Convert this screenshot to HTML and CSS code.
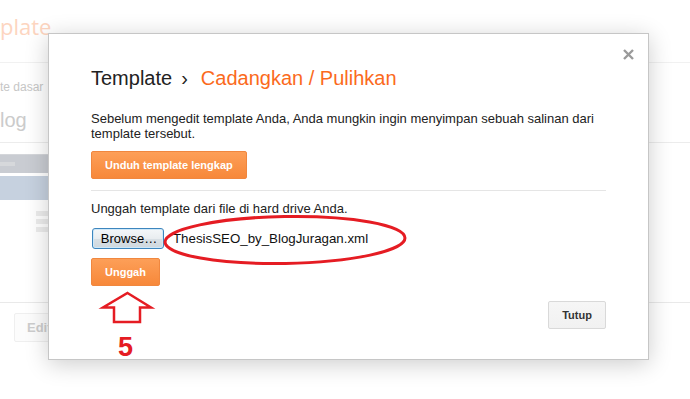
FILE: index.html
```html
<!DOCTYPE html>
<html lang="id">
<head>
<meta charset="utf-8">
<title>Template - Cadangkan / Pulihkan</title>
<link rel="stylesheet" href="styles.css">
</head>
<body>
<div class="page">
  <header class="bg-head"><span class="bg-title">plate</span></header>
  <div class="bg-body">
    <div class="bg-sub">te dasar</div>
    <div class="bg-blog">log</div>
  </div>
  <div class="bg-section">
    <div class="bg-preview">
      <div class="bg-bar"><span class="bg-chip"></span></div>
      <div class="bg-blue"></div>
    </div>
    <div class="bg-list"><span></span><span></span><span></span></div>
  </div>
  <div class="bg-foot"><span class="bg-edit">Edit</span></div>
</div>

<div class="modal">
  <button class="close" aria-label="Tutup">
    <svg width="11" height="11" viewBox="0 0 11 11"><path d="M1 1 L10 10 M10 1 L1 10" stroke="#9a9a9a" stroke-width="2.4" fill="none"/></svg>
  </button>
  <h1 class="title"><span class="crumb-root">Template</span><span class="sep">›</span><span class="crumb">Cadangkan / Pulihkan</span></h1>
  <p class="intro">Sebelum mengedit template Anda, Anda mungkin ingin menyimpan sebuah salinan dari template tersebut.</p>
  <button class="btn btn-orange btn-download">Unduh template lengkap</button>
  <hr class="divider">
  <p class="upload-label">Unggah template dari file di hard drive Anda.</p>
  <div class="file-row"><button class="browse">Browse…</button><span class="file-name">ThesisSEO_by_BlogJuragan.xml</span></div>
  <button class="btn btn-orange btn-upload">Unggah</button>
  <div class="modal-foot"><button class="btn btn-gray">Tutup</button></div>
</div>

<svg class="marks" width="690" height="399" viewBox="0 0 690 399">
  <ellipse cx="285" cy="240" rx="120" ry="23.5" transform="rotate(-1 285 240)" fill="none" stroke="#e51c23" stroke-width="3"/>
  <path d="M127.5 293 L151 307.5 L140 307.5 L140 322 L114 322 L114 307.5 L103 307.5 Z" fill="none" stroke="#e51c23" stroke-width="2.5" stroke-linejoin="miter"/>
  <text x="118" y="356" class="five">5</text>
</svg>
</body>
</html>
```
FILE: styles.css
```css
* { box-sizing: border-box; }
html, body { margin: 0; padding: 0; background: #fff; }
body {
  width: 690px;
  height: 399px;
  overflow: hidden;
  position: relative;
  font-family: "Liberation Sans", Arial, sans-serif;
  color: #222;
}

/* ---------- faded background page ---------- */
.page { display: flex; flex-direction: column; }
.bg-head {
  height: 63px;
  border-bottom: 1px solid #f1f1f1;
  padding-top: 11px;
}
.bg-title {
  display: block;
  font-family: "Open Sans", sans-serif;
  font-size: 22px;
  line-height: 30px;
  color: #fdd5c0;
}
.bg-body {
  padding: 17px 0 10px;
  border-bottom: 1px solid #ececec;
}
.bg-sub {
  font-size: 12px;
  line-height: 14px;
  color: #c6c6c6;
}
.bg-blog {
  margin-top: 15px;
  font-size: 20px;
  line-height: 23px;
  color: #cbcbcb;
}
.bg-section {
  height: 160px;
  padding-top: 11px;
  border-bottom: 1px solid #e9e9e9;
}
.bg-preview { display: flex; flex-direction: column; gap: 3px; width: 60px; }
.bg-bar {
  height: 19px;
  background: #c9ccd2;
  border-top: 1px solid #d4d6da;
  display: flex;
  align-items: center;
}
.bg-chip { width: 15px; height: 4px; background: #d6d8db; }
.bg-blue { height: 24px; background: #c6d1df; }
.bg-list {
  margin: 11px 0 0 36px;
  display: flex;
  flex-direction: column;
  gap: 3px;
}
.bg-list span { display: block; width: 14px; height: 5px; background: #ececec; }
.bg-foot { padding: 10px 0 0 14px; }
.bg-edit {
  display: inline-block;
  height: 29px;
  padding: 0 12px;
  line-height: 27px;
  border: 1px solid #efefef;
  border-radius: 2px;
  background: #fcfcfc;
  color: #cdcdcd;
  font-size: 13px;
  font-weight: bold;
}

/* ---------- modal ---------- */
.modal {
  position: absolute;
  left: 48px;
  top: 33px;
  width: 601px;
  display: flex;
  flex-direction: column;
  align-items: flex-start;
  padding: 32px 42px 30px;
  background: #fff;
  border: 1px solid #c6c6c6;
  box-shadow: 0 4px 22px rgba(0, 0, 0, 0.2);
}
.close {
  position: absolute;
  top: 15px;
  right: 14px;
  width: 11px;
  height: 11px;
  padding: 0;
  border: 0;
  background: none;
  display: flex;
}
.title {
  margin: 0;
  font-size: 20px;
  line-height: 24px;
  font-weight: normal;
  color: #222;
  display: flex;
}
.sep { margin: 0 13px 0 9px; }
.crumb { color: #fb6a1c; }
.intro, .upload-label {
  margin: 21px 0 0;
  font-size: 13px;
  line-height: 15px;
  color: #222;
}
.upload-label { margin-top: 10px; }
.btn {
  display: block;
  height: 28px;
  padding: 0 10px;
  border-radius: 2px;
  font-family: "Liberation Sans", Arial, sans-serif;
  font-size: 11px;
  font-weight: bold;
  line-height: 26px;
  text-align: center;
}
.btn-orange {
  margin-top: 10px;
  color: #fff;
  background: linear-gradient(#fd9f58, #f7883a);
  border: 1px solid #f0873f;
}
.btn-download { padding: 0 13px; }
.btn-upload { margin-top: 9px; min-width: 69px; }
.divider {
  align-self: stretch;
  margin: 11px 0 0;
  border: 0;
  height: 1px;
  background: #e5e5e5;
}
.file-row {
  margin-top: 12px;
  display: flex;
  align-items: center;
  gap: 9px;
  margin-left: 1px;
}
.browse {
  width: 72px;
  height: 21px;
  padding: 0 0 0 2px;
  border: 1px solid #3d86be;
  border-radius: 3px;
  background: linear-gradient(#f4f7f9 0%, #e9edf0 50%, #d9e0e5 51%, #cfd8de 100%);
  box-shadow: inset 0 0 0 1px #cfe8f8;
  font-family: "Liberation Sans", Arial, sans-serif;
  font-size: 13px;
  line-height: 19px;
  color: #000;
}
.file-name {
  font-size: 13.3px;
  color: #111;
}
.modal-foot {
  align-self: stretch;
  margin-top: 15px;
  display: flex;
  justify-content: flex-end;
}
.btn-gray {
  min-width: 58px;
  color: #333;
  background: linear-gradient(#f6f6f6, #f1f1f1);
  border: 1px solid #d9d9d9;
}

/* ---------- annotations drawn over the screenshot ---------- */
.marks {
  position: absolute;
  left: 0;
  top: 0;
  pointer-events: none;
}
.five {
  font-family: "Liberation Sans", Arial, sans-serif;
  font-size: 27px;
  font-weight: bold;
  fill: #e51c23;
}
```
